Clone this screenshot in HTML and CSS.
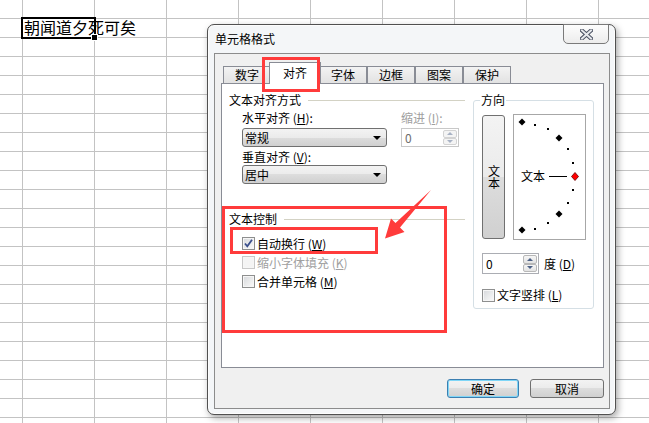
FILE: index.html
```html
<!DOCTYPE html>
<html lang="zh-CN">
<head>
<meta charset="utf-8">
<title>单元格格式</title>
<link rel="stylesheet" href="styles.css">
</head>
<body>
<div class="sheet">
  <div class="cell sel"><span class="cell-text">朝闻道夕死可矣</span><i class="handle"></i></div>
</div>

<div class="dialog">
  <div class="titlebar">单元格格式</div>
  <button class="close" aria-label="关闭">
    <svg width="13" height="11" viewBox="0 0 13 11">
      <path d="M2 1.5 L11 9.5 M11 1.5 L2 9.5" stroke="#4a5162" stroke-width="4" stroke-linecap="square" fill="none"/>
      <path d="M2 1.5 L11 9.5 M11 1.5 L2 9.5" stroke="#e6e8ec" stroke-width="2" stroke-linecap="square" fill="none"/>
    </svg>
  </button>
  <div class="client">
    <div class="tabs">
      <div class="tab">数字</div>
      <div class="tab active">对齐</div>
      <div class="tab">字体</div>
      <div class="tab">边框</div>
      <div class="tab">图案</div>
      <div class="tab">保护</div>
    </div>
    <div class="panel">
      <div class="left">
        <div class="ghead"><span>文本对齐方式</span><i class="rule"></i></div>
        <div class="align-block">
          <div class="col-a">
            <div class="lbl">水平对齐 (<u>H</u>):</div>
            <div class="select"><span>常规</span><i class="caret"></i></div>
            <div class="lbl lbl2">垂直对齐 (<u>V</u>):</div>
            <div class="select select2"><span>居中</span><i class="caret"></i></div>
          </div>
          <div class="col-b">
            <div class="lbl dis">缩进 (<u>I</u>):</div>
            <div class="spin spin-dis">
              <span class="spin-val">0</span>
              <div class="spin-btns">
                <i class="sb"><i class="tri-up"></i></i>
                <i class="sb"><i class="tri-down"></i></i>
              </div>
            </div>
          </div>
        </div>
        <div class="ghead g2"><span>文本控制</span><i class="rule"></i></div>
        <div class="checks">
          <div class="chk"><span class="box"><svg width="11" height="11" viewBox="0 0 11 11"><path d="M2 5.5 L4.3 8.3 L9 1.8" stroke="#3b4f8c" stroke-width="1.8" fill="none"/></svg></span>自动换行 (<u>W</u>)</div>
          <div class="chk dis"><span class="box box-dis"></span>缩小字体填充 (<u>K</u>)</div>
          <div class="chk"><span class="box"></span>合并单元格 (<u>M</u>)</div>
        </div>
      </div>

      <fieldset class="orient">
        <legend>方向</legend>
        <div class="orient-row">
          <div class="vbtn"><span class="vtext">文本</span></div>
          <div class="dial">
            <svg class="dial-svg" width="71" height="124" viewBox="0 0 71 124">
              <g fill="#000">
                <path d="M8 3.5 L11.5 7 L8 10.5 L4.5 7 Z"/>
                <path d="M45 19.5 L48.5 23 L45 26.5 L41.5 23 Z"/>
                <path d="M45 95.5 L48.5 99 L45 102.5 L41.5 99 Z"/>
                <path d="M8 111.5 L11.5 115 L8 118.5 L4.5 115 Z"/>
                <rect x="20" y="9" width="2" height="2"/>
                <rect x="33" y="13" width="2" height="2"/>
                <rect x="53" y="33" width="2" height="2"/>
                <rect x="58" y="47" width="2" height="2"/>
                <rect x="58" y="74" width="2" height="2"/>
                <rect x="53" y="87" width="2" height="2"/>
                <rect x="33" y="107" width="2" height="2"/>
                <rect x="20" y="113" width="2" height="2"/>
              </g>
              <line x1="35" y1="61.5" x2="53" y2="61.5" stroke="#000" stroke-width="1"/>
              <path d="M61 57.5 L64.5 61.5 L61 65.5 L57.5 61.5 Z" fill="#f00" stroke="#600" stroke-width="0.8"/>
            </svg>
            <span class="dial-text">文本</span>
          </div>
        </div>
        <div class="deg-row">
          <div class="spin spin-deg">
            <span class="spin-val">0</span>
            <div class="spin-btns">
              <i class="sb"><i class="tri-up"></i></i>
              <i class="sb"><i class="tri-down"></i></i>
            </div>
          </div>
          <span class="deg-lbl">度 (<u>D</u>)</span>
        </div>
        <div class="chk vert"><span class="box"></span>文字竖排 (<u>L</u>)</div>
      </fieldset>
    </div>
    <div class="btnrow">
      <button class="btn btn-ok">确定</button>
      <button class="btn btn-cancel">取消</button>
    </div>
  </div>
</div>

<div class="mark m-tab"></div>
<div class="mark m-group"></div>
<div class="mark m-wrap"></div>
<svg class="arrow" width="649" height="423" viewBox="0 0 649 423">
  <path d="M431 190 L400 227.5 L404.5 232 L385 238.5 L391 218.5 L395.5 223 Z" fill="#ff3b3b"/>
</svg>
</body>
</html>
```

FILE: styles.css
```css
html, body {
  margin: 0;
  padding: 0;
}
body {
  width: 649px;
  height: 423px;
  overflow: hidden;
  position: relative;
  background: #fff;
  font-family: "Noto Sans CJK SC", "Noto Sans", sans-serif;
  color: #000;
}

/* spreadsheet */
.sheet {
  display: grid;
  grid-template-columns: 22px repeat(9, 72px);
  grid-template-rows: 18px repeat(21, 19px);
  height: 423px;
  background-image:
    linear-gradient(to right, #c3c3c3 1px, transparent 1px),
    linear-gradient(to bottom, #c3c3c3 1px, transparent 1px);
  background-size: 72px 19px;
  background-position: 22px 18px;
}
.cell.sel {
  grid-column: 2;
  grid-row: 2;
  position: relative;
  white-space: nowrap;
  font-size: 16px;
  line-height: 19px;
  padding-left: 2px;
}
.cell.sel::after {
  content: "";
  position: absolute;
  left: -1px;
  top: -1px;
  right: -2px;
  bottom: -2px;
  border: 2px solid #000;
}
.cell-text {
  position: relative;
  z-index: 1;
}
.handle {
  position: absolute;
  right: -4px;
  bottom: -4px;
  width: 5px;
  height: 5px;
  background: #000;
  border: 1px solid #fff;
  z-index: 2;
}

/* dialog window */
.dialog {
  position: absolute;
  left: 207px;
  top: 24px;
  width: 409px;
  height: 391px;
  box-sizing: border-box;
  border: 1px solid #505050;
  border-radius: 7px;
  background: #f4f6f8;
  box-shadow: 2px 3px 7px rgba(0, 0, 0, 0.35), inset 0 0 0 1px #fdfdfd;
  display: flex;
  flex-direction: column;
  font-size: 12px;
  line-height: 14px;
  z-index: 3;
}
.titlebar {
  height: 28px;
  box-sizing: border-box;
  padding: 0 0 1px 7px;
  display: flex;
  align-items: center;
}
.close {
  position: absolute;
  top: -1px;
  right: 6px;
  width: 46px;
  height: 20px;
  box-sizing: border-box;
  border: 1px solid #7a7a7a;
  border-radius: 0 0 5px 5px;
  background: linear-gradient(#fdfdfd, #ececec);
  padding: 0;
  display: flex;
  align-items: center;
  justify-content: center;
}
.client {
  flex: 1;
  margin: 0 5px 5px 6px;
  border: 1px solid #8c8c8c;
  background: #f0f0f0;
  padding: 0 5px 0 6px;
  display: flex;
  flex-direction: column;
}

/* tabs */
.tabs {
  display: flex;
  align-items: flex-end;
  padding: 8px 0 0 2px;
  position: relative;
  z-index: 1;
}
.tab {
  width: 48px;
  height: 17px;
  box-sizing: border-box;
  border: 1px solid #898c95;
  border-bottom: 0;
  background: linear-gradient(#f3f3f3, #e2e2e2);
  text-align: center;
  line-height: 16px;
}
.tab.active {
  width: 52px;
  height: 22px;
  margin: 0 -2px -1px;
  background: #fff;
  line-height: 20px;
  position: relative;
  z-index: 2;
}
.panel {
  height: 285px;
  box-sizing: border-box;
  border: 1px solid #898c95;
  background: #fff;
  display: flex;
  align-items: flex-start;
}

/* left column */
.left {
  width: 243px;
  box-sizing: border-box;
  padding-left: 7px;
}
.ghead {
  display: flex;
  align-items: center;
  height: 14px;
  margin-top: 9px;
  white-space: nowrap;
}
.ghead.g2 {
  margin-top: 28px;
}
.rule {
  flex: 1;
  margin-left: 7px;
  border-top: 1px solid #d3d2c4;
}
.align-block {
  display: flex;
  padding-left: 13px;
}
.col-a {
  width: 145px;
}
.col-b {
  width: 58px;
  margin-left: 14px;
}
.lbl {
  height: 14px;
  margin-top: 4px;
  white-space: nowrap;
}
.lbl.lbl2 {
  margin-top: 3px;
}
.dis {
  color: #a0a0a0;
}
.select {
  margin-top: 3px;
  height: 19px;
  box-sizing: border-box;
  border: 1px solid #707070;
  border-radius: 3px;
  background: linear-gradient(#f3f3f3 0%, #ebebeb 50%, #dddddd 50%, #d0d0d0 100%);
  display: flex;
  align-items: center;
  padding-left: 2px;
}
.select.select2 {
  margin-top: 1px;
}
.caret {
  margin-left: auto;
  margin-right: 5px;
  width: 0;
  height: 0;
  border-left: 4px solid transparent;
  border-right: 4px solid transparent;
  border-top: 4px solid #000;
}

/* spin boxes */
.spin {
  margin-top: 3px;
  height: 19px;
  box-sizing: border-box;
  border: 1px solid #abadb3;
  background: #fff;
  display: flex;
}
.spin-val {
  flex: 1;
  padding-left: 3px;
  line-height: 17px;
}
.spin-dis {
  border-color: #c8c8c8;
}
.spin-dis .spin-val {
  color: #6d6d6d;
}
.spin-btns {
  width: 15px;
  display: flex;
  flex-direction: column;
  padding: 1px 1px 1px 0;
  box-sizing: border-box;
}
.sb {
  flex: 1;
  border: 1px solid #b8b8b8;
  border-radius: 2px;
  background: linear-gradient(#f6f6f6, #e3e3e3);
  display: flex;
  align-items: center;
  justify-content: center;
}
.spin-dis .sb {
  border-color: #d3d3d3;
  background: #f4f4f4;
}
.tri-up, .tri-down {
  width: 0;
  height: 0;
  border-left: 3px solid transparent;
  border-right: 3px solid transparent;
}
.tri-up {
  border-bottom: 3px solid #4d6185;
}
.tri-down {
  border-top: 3px solid #4d6185;
}
.spin-dis .tri-up {
  border-bottom-color: #a8b2c4;
}
.spin-dis .tri-down {
  border-top-color: #a8b2c4;
}

/* checkboxes */
.checks {
  margin-top: 8px;
  padding-left: 13px;
}
.chk {
  display: flex;
  align-items: center;
  height: 19px;
  white-space: nowrap;
}
.box {
  width: 13px;
  height: 13px;
  box-sizing: border-box;
  border: 1px solid #8e8f8f;
  background: linear-gradient(135deg, #d6d8db, #fbfbfb);
  box-shadow: inset 0 0 0 1px #f6f6f6;
  margin-right: 2px;
  display: flex;
  align-items: center;
  justify-content: center;
  flex: none;
}
.box-dis {
  border-color: #c8c8c8;
  background: #f4f4f4;
}

/* orientation group */
.orient {
  margin: 9px 0 0 8px;
  width: 121px;
  min-width: 0;
  box-sizing: border-box;
  border: 1px solid #d5dfe5;
  border-radius: 3px;
  padding: 7px 7px 6px 8px;
}
.orient legend {
  padding: 0 1px;
  margin-left: -2px;
  line-height: 14px;
}
.orient-row {
  display: flex;
  align-items: flex-start;
}
.vbtn {
  margin-top: 1px;
  width: 23px;
  height: 124px;
  box-sizing: border-box;
  border: 1px solid #707070;
  border-radius: 3px;
  background: linear-gradient(#f3f3f3 0%, #ebebeb 50%, #dddddd 50%, #d0d0d0 100%);
  display: flex;
  align-items: center;
  justify-content: center;
}
.vtext {
  writing-mode: vertical-rl;
  line-height: 14px;
}
.dial {
  margin-left: 8px;
  width: 73px;
  height: 126px;
  box-sizing: border-box;
  border: 1px solid #a7a7a7;
  background: #fff;
  position: relative;
}
.dial-svg {
  position: absolute;
  left: 0;
  top: 0;
}
.dial-text {
  position: absolute;
  left: 7px;
  top: 54px;
  line-height: 14px;
}
.deg-row {
  display: flex;
  align-items: center;
  margin-top: 13px;
}
.spin.spin-deg {
  margin-top: 0;
  width: 57px;
  height: 21px;
}
.spin-deg .spin-val {
  line-height: 19px;
}
.deg-lbl {
  margin-left: 5px;
  white-space: nowrap;
}
.chk.vert {
  margin-top: 14px;
  height: 14px;
}

/* bottom buttons */
.btnrow {
  display: flex;
  justify-content: flex-end;
  gap: 11px;
  margin-top: 11px;
}
.btn {
  height: 19px;
  box-sizing: border-box;
  border: 1px solid #707070;
  border-radius: 3px;
  background: linear-gradient(#f3f3f3 0%, #ebebeb 50%, #dddddd 50%, #d0d0d0 100%);
  font: inherit;
  font-size: 12px;
  line-height: 14px;
  color: #000;
  padding: 0;
}
.btn-ok {
  width: 72px;
  border-color: #3c7fb1;
  box-shadow: inset 0 0 0 1px #7fd6f7;
}
.btn-cancel {
  width: 74px;
}

/* annotations */
.mark {
  position: absolute;
  box-sizing: border-box;
  border: 3px solid #ff3b3b;
  z-index: 5;
}
.m-tab {
  left: 262px;
  top: 57px;
  width: 58px;
  height: 35px;
}
.m-group {
  left: 222px;
  top: 206px;
  width: 225px;
  height: 127px;
}
.m-wrap {
  left: 230px;
  top: 227px;
  width: 148px;
  height: 27px;
}
.arrow {
  position: absolute;
  left: 0;
  top: 0;
  z-index: 6;
  pointer-events: none;
}
```
